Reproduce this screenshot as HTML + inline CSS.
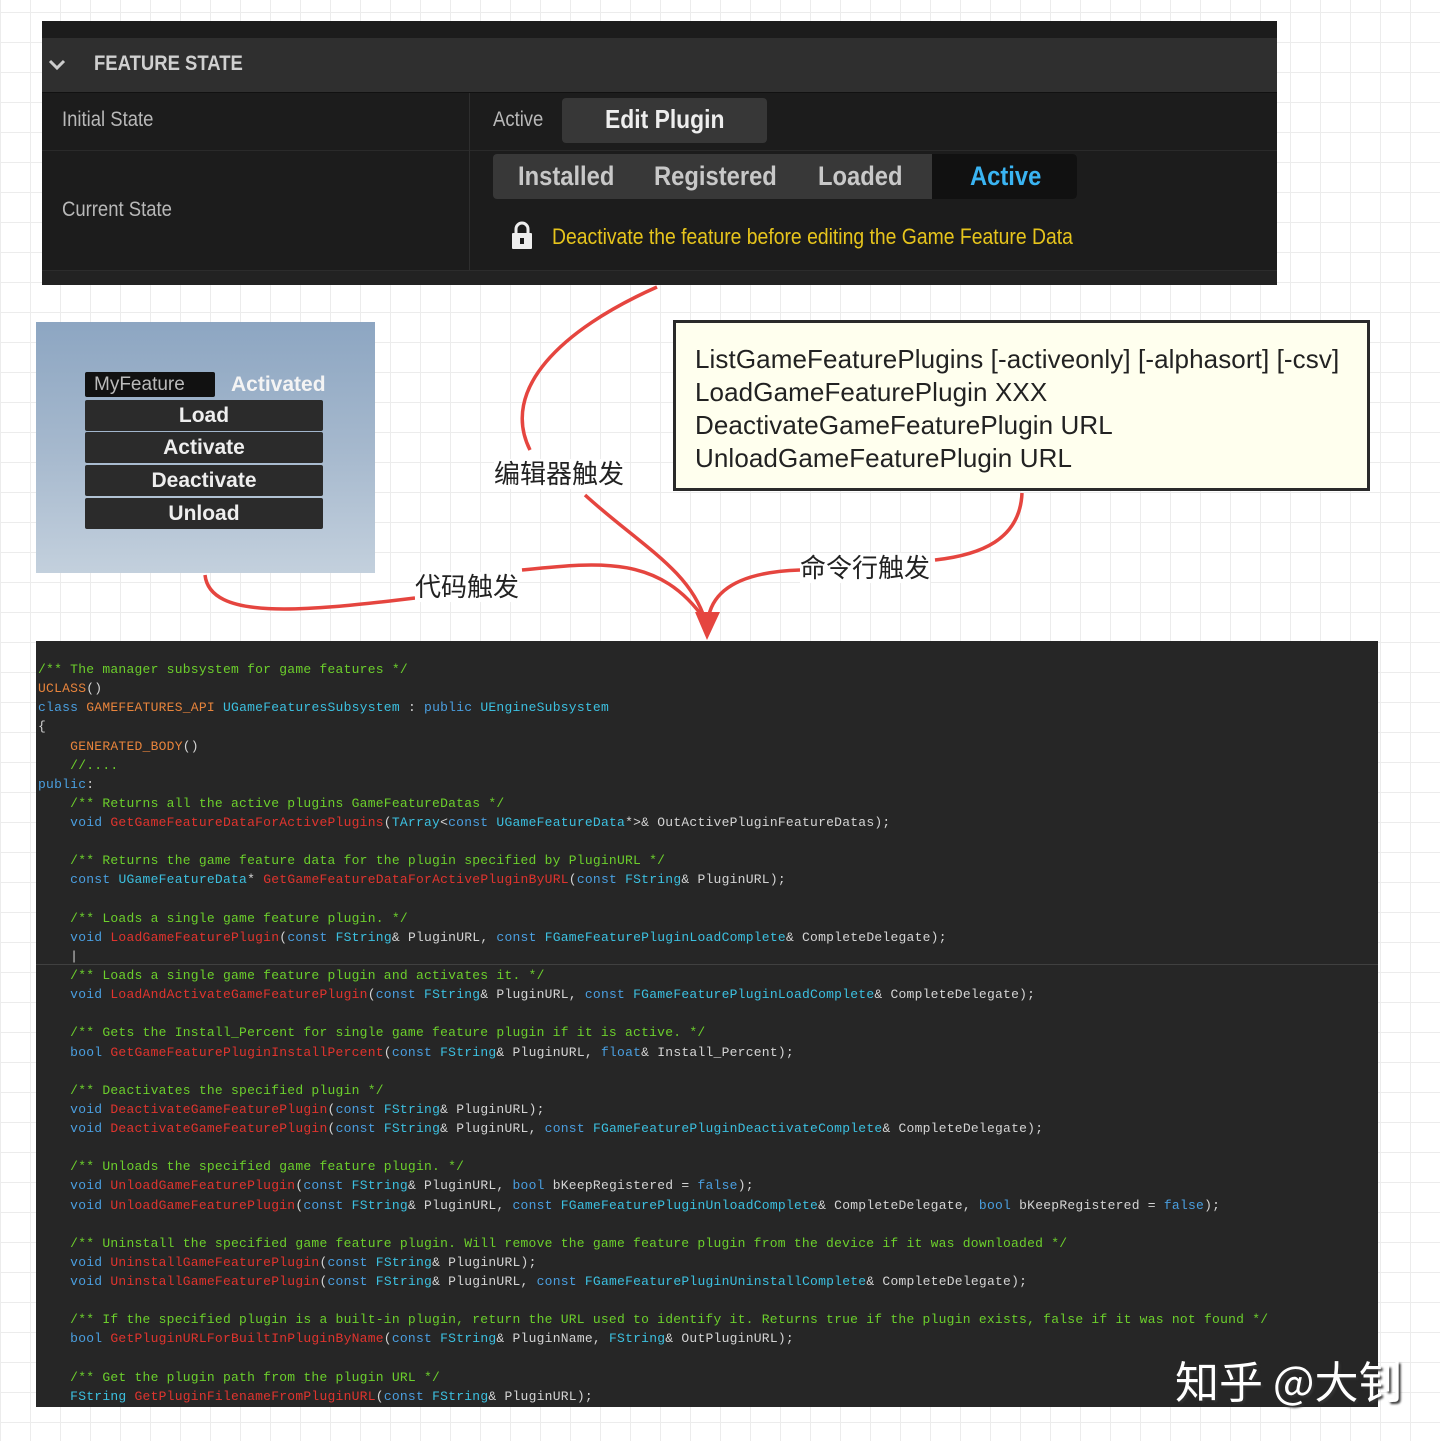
<!DOCTYPE html>
<html><head><meta charset="utf-8">
<style>
*{margin:0;padding:0;box-sizing:border-box}
html,body{width:1440px;height:1441px;overflow:hidden}
body{position:relative;background-color:#fff;
background-image:linear-gradient(#ececec 1px,transparent 1px),linear-gradient(90deg,#ececec 1px,transparent 1px);
background-size:30px 30px;background-position:0 12px;
font-family:"Liberation Sans","Noto Sans CJK SC",sans-serif}
.abs{position:absolute}
.nar{display:inline-block;transform:scaleX(0.88);transform-origin:left center;white-space:nowrap}
#top{left:42px;top:21px;width:1235px;height:264px;background:#1c1c1c}
#hdr{position:absolute;left:0;top:17px;width:1235px;height:54px;background:#2f2f2f;color:#d0d0d0;font-weight:bold;font-size:21px}
.lbl{color:#b8b8b8;font-size:21px;position:absolute}
.seg{position:absolute;font-size:27px;font-weight:bold;color:#c8c8c8}
#code{left:36px;top:641px;width:1342px;height:766px;background:#262626;padding:19px 0 0 2px;
font-family:"Liberation Mono",monospace;font-size:13px;line-height:19.13px;white-space:pre;color:#d4d4d4;letter-spacing:0.24px}
.c{color:#6ccf2c}.k{color:#4a9fe0}.t{color:#3cc0e0}.m{color:#e8843c}.f{color:#e0342e}
#note{left:673px;top:320px;width:697px;height:171px;background:#ffffee;border:3px solid #2a2a2a;font-size:26px;line-height:33px;padding:20px 0 0 19px;color:#222;letter-spacing:0.1px}
#uep{left:36px;top:322px;width:339px;height:251px;background:linear-gradient(180deg,#8da6c2 0%,#a5b8cd 50%,#c3d0dd 100%)}
.btn{position:absolute;left:49px;width:238px;height:31px;background:#2b2b2b;border-radius:2px;color:#eee;font-weight:bold;font-size:21px;text-align:center;line-height:31px}
.cn{position:absolute;font-size:26px;color:#222;background:#fff;line-height:30px}
</style></head><body>

<div id="top" class="abs">
  <div id="hdr"><svg style="position:absolute;left:6px;top:20px" width="18" height="14"><path d="M2 3 L9 10 L16 3" stroke="#ccc" stroke-width="3" fill="none"/></svg>
  <span class="nar" style="position:absolute;left:52px;top:14px">FEATURE STATE</span></div>
  <div class="abs" style="left:0;top:71px;width:1235px;height:1px;background:#111"></div>
  <div class="abs" style="left:0;top:129px;width:1235px;height:1px;background:#2a2a2a"></div>
  <div class="abs" style="left:427px;top:72px;width:1px;height:178px;background:#2e2e2e"></div>
  <div class="abs" style="left:0;top:249px;width:1235px;height:15px;background:#222;border-top:1px solid #2c2c2c"></div>
  <div class="lbl nar" style="left:20px;top:87px">Initial State</div>
  <div class="lbl nar" style="left:20px;top:177px">Current State</div>
  <div class="lbl nar" style="left:451px;top:87px">Active</div>
  <div class="abs" style="left:520px;top:77px;width:205px;height:45px;background:#373737;border-radius:4px;color:#eee;font-weight:bold;font-size:26px;line-height:43px"><span class="nar" style="position:absolute;left:43px">Edit Plugin</span></div>
  <div class="abs" style="left:451px;top:133px;width:584px;height:45px;background:#383838;border-radius:4px"></div>
  <div class="abs" style="left:890px;top:133px;width:145px;height:45px;background:#111;border-radius:0 4px 4px 0"></div>
  <div class="seg nar" style="left:476px;top:140px">Installed</div>
  <div class="seg nar" style="left:612px;top:140px">Registered</div>
  <div class="seg nar" style="left:776px;top:140px">Loaded</div>
  <div class="seg nar" style="left:928px;top:140px;color:#3ab4f2">Active</div>
  <svg class="abs" style="left:468px;top:199px" width="24" height="32"><path d="M6 13 V9 a6 6 0 0 1 12 0 V13" stroke="#eee" stroke-width="3" fill="none"/><rect x="2" y="13" width="20" height="16" rx="1" fill="#eee"/><rect x="10" y="18" width="4" height="6" fill="#1c1c1c"/></svg>
  <div class="abs nar" style="left:510px;top:203px;color:#e6c41c;font-size:22px">Deactivate the feature before editing the Game Feature Data</div>
</div>

<div id="uep" class="abs">
  <div class="abs" style="left:49px;top:50px;width:130px;height:25px;background:#111;border-radius:2px;color:#bbb;font-size:19px;padding-left:9px;line-height:25px">MyFeature</div>
  <div class="abs" style="left:195px;top:50px;color:#f4f4f4;font-weight:bold;font-size:21px;line-height:25px">Activated</div>
  <div class="btn" style="top:78px">Load</div>
  <div class="btn" style="top:110px">Activate</div>
  <div class="btn" style="top:143px">Deactivate</div>
  <div class="btn" style="top:176px">Unload</div>
</div>

<div id="note" class="abs">ListGameFeaturePlugins [-activeonly] [-alphasort] [-csv]<br>LoadGameFeaturePlugin XXX<br>DeactivateGameFeaturePlugin URL<br>UnloadGameFeaturePlugin URL</div>

<svg class="abs" style="left:0;top:0" width="1440" height="650">
<g stroke="#e5453f" stroke-width="3.5" fill="none">
<path d="M657 287 C560 330 500 390 530 450"/>
<path d="M585 495 C640 545 690 570 705 620"/>
<path d="M205 575 C210 620 300 612 415 598"/>
<path d="M522 570 C600 562 660 555 705 620"/>
<path d="M1022 493 C1020 540 980 555 935 560"/>
<path d="M800 570 C740 572 712 590 708 620"/>
</g>
<path d="M695 612 L720 612 L707 640 Z" fill="#e5453f"/>
</svg>
<div class="cn" style="left:494px;top:459px">编辑器触发</div>
<div class="cn" style="left:415px;top:572px">代码触发</div>
<div class="cn" style="left:800px;top:553px">命令行触发</div>

<div id="code" class="abs"><span class="c">/** The manager subsystem for game features */</span>
<span class="m">UCLASS</span>()
<span class="k">class</span> <span class="m">GAMEFEATURES_API</span> <span class="t">UGameFeaturesSubsystem</span> : <span class="k">public</span> <span class="t">UEngineSubsystem</span>
{
    <span class="m">GENERATED_BODY</span>()
    <span class="c">//....</span>
<span class="k">public</span>:
    <span class="c">/** Returns all the active plugins GameFeatureDatas */</span>
    <span class="k">void</span> <span class="f">GetGameFeatureDataForActivePlugins</span>(<span class="t">TArray</span>&lt;<span class="k">const</span> <span class="t">UGameFeatureData</span>*&gt;&amp; OutActivePluginFeatureDatas);

    <span class="c">/** Returns the game feature data for the plugin specified by PluginURL */</span>
    <span class="k">const</span> <span class="t">UGameFeatureData</span>* <span class="f">GetGameFeatureDataForActivePluginByURL</span>(<span class="k">const</span> <span class="t">FString</span>&amp; PluginURL);

    <span class="c">/** Loads a single game feature plugin. */</span>
    <span class="k">void</span> <span class="f">LoadGameFeaturePlugin</span>(<span class="k">const</span> <span class="t">FString</span>&amp; PluginURL, <span class="k">const</span> <span class="t">FGameFeaturePluginLoadComplete</span>&amp; CompleteDelegate);
    |
    <span class="c">/** Loads a single game feature plugin and activates it. */</span>
    <span class="k">void</span> <span class="f">LoadAndActivateGameFeaturePlugin</span>(<span class="k">const</span> <span class="t">FString</span>&amp; PluginURL, <span class="k">const</span> <span class="t">FGameFeaturePluginLoadComplete</span>&amp; CompleteDelegate);

    <span class="c">/** Gets the Install_Percent for single game feature plugin if it is active. */</span>
    <span class="k">bool</span> <span class="f">GetGameFeaturePluginInstallPercent</span>(<span class="k">const</span> <span class="t">FString</span>&amp; PluginURL, <span class="k">float</span>&amp; Install_Percent);

    <span class="c">/** Deactivates the specified plugin */</span>
    <span class="k">void</span> <span class="f">DeactivateGameFeaturePlugin</span>(<span class="k">const</span> <span class="t">FString</span>&amp; PluginURL);
    <span class="k">void</span> <span class="f">DeactivateGameFeaturePlugin</span>(<span class="k">const</span> <span class="t">FString</span>&amp; PluginURL, <span class="k">const</span> <span class="t">FGameFeaturePluginDeactivateComplete</span>&amp; CompleteDelegate);

    <span class="c">/** Unloads the specified game feature plugin. */</span>
    <span class="k">void</span> <span class="f">UnloadGameFeaturePlugin</span>(<span class="k">const</span> <span class="t">FString</span>&amp; PluginURL, <span class="k">bool</span> bKeepRegistered = <span class="k">false</span>);
    <span class="k">void</span> <span class="f">UnloadGameFeaturePlugin</span>(<span class="k">const</span> <span class="t">FString</span>&amp; PluginURL, <span class="k">const</span> <span class="t">FGameFeaturePluginUnloadComplete</span>&amp; CompleteDelegate, <span class="k">bool</span> bKeepRegistered = <span class="k">false</span>);

    <span class="c">/** Uninstall the specified game feature plugin. Will remove the game feature plugin from the device if it was downloaded */</span>
    <span class="k">void</span> <span class="f">UninstallGameFeaturePlugin</span>(<span class="k">const</span> <span class="t">FString</span>&amp; PluginURL);
    <span class="k">void</span> <span class="f">UninstallGameFeaturePlugin</span>(<span class="k">const</span> <span class="t">FString</span>&amp; PluginURL, <span class="k">const</span> <span class="t">FGameFeaturePluginUninstallComplete</span>&amp; CompleteDelegate);

    <span class="c">/** If the specified plugin is a built-in plugin, return the URL used to identify it. Returns true if the plugin exists, false if it was not found */</span>
    <span class="k">bool</span> <span class="f">GetPluginURLForBuiltInPluginByName</span>(<span class="k">const</span> <span class="t">FString</span>&amp; PluginName, <span class="t">FString</span>&amp; OutPluginURL);

    <span class="c">/** Get the plugin path from the plugin URL */</span>
    <span class="t">FString</span> <span class="f">GetPluginFilenameFromPluginURL</span>(<span class="k">const</span> <span class="t">FString</span>&amp; PluginURL);</div>
<div class="abs" style="left:36px;top:964px;width:1342px;height:1px;background:#404040"></div>
<div class="abs" style="left:1175px;top:1350px;font-size:44px;color:#fff;font-family:'Noto Sans CJK SC',sans-serif;text-shadow:2px 2px 2px #333;line-height:58px">知乎 @大钊</div>
</body></html>
